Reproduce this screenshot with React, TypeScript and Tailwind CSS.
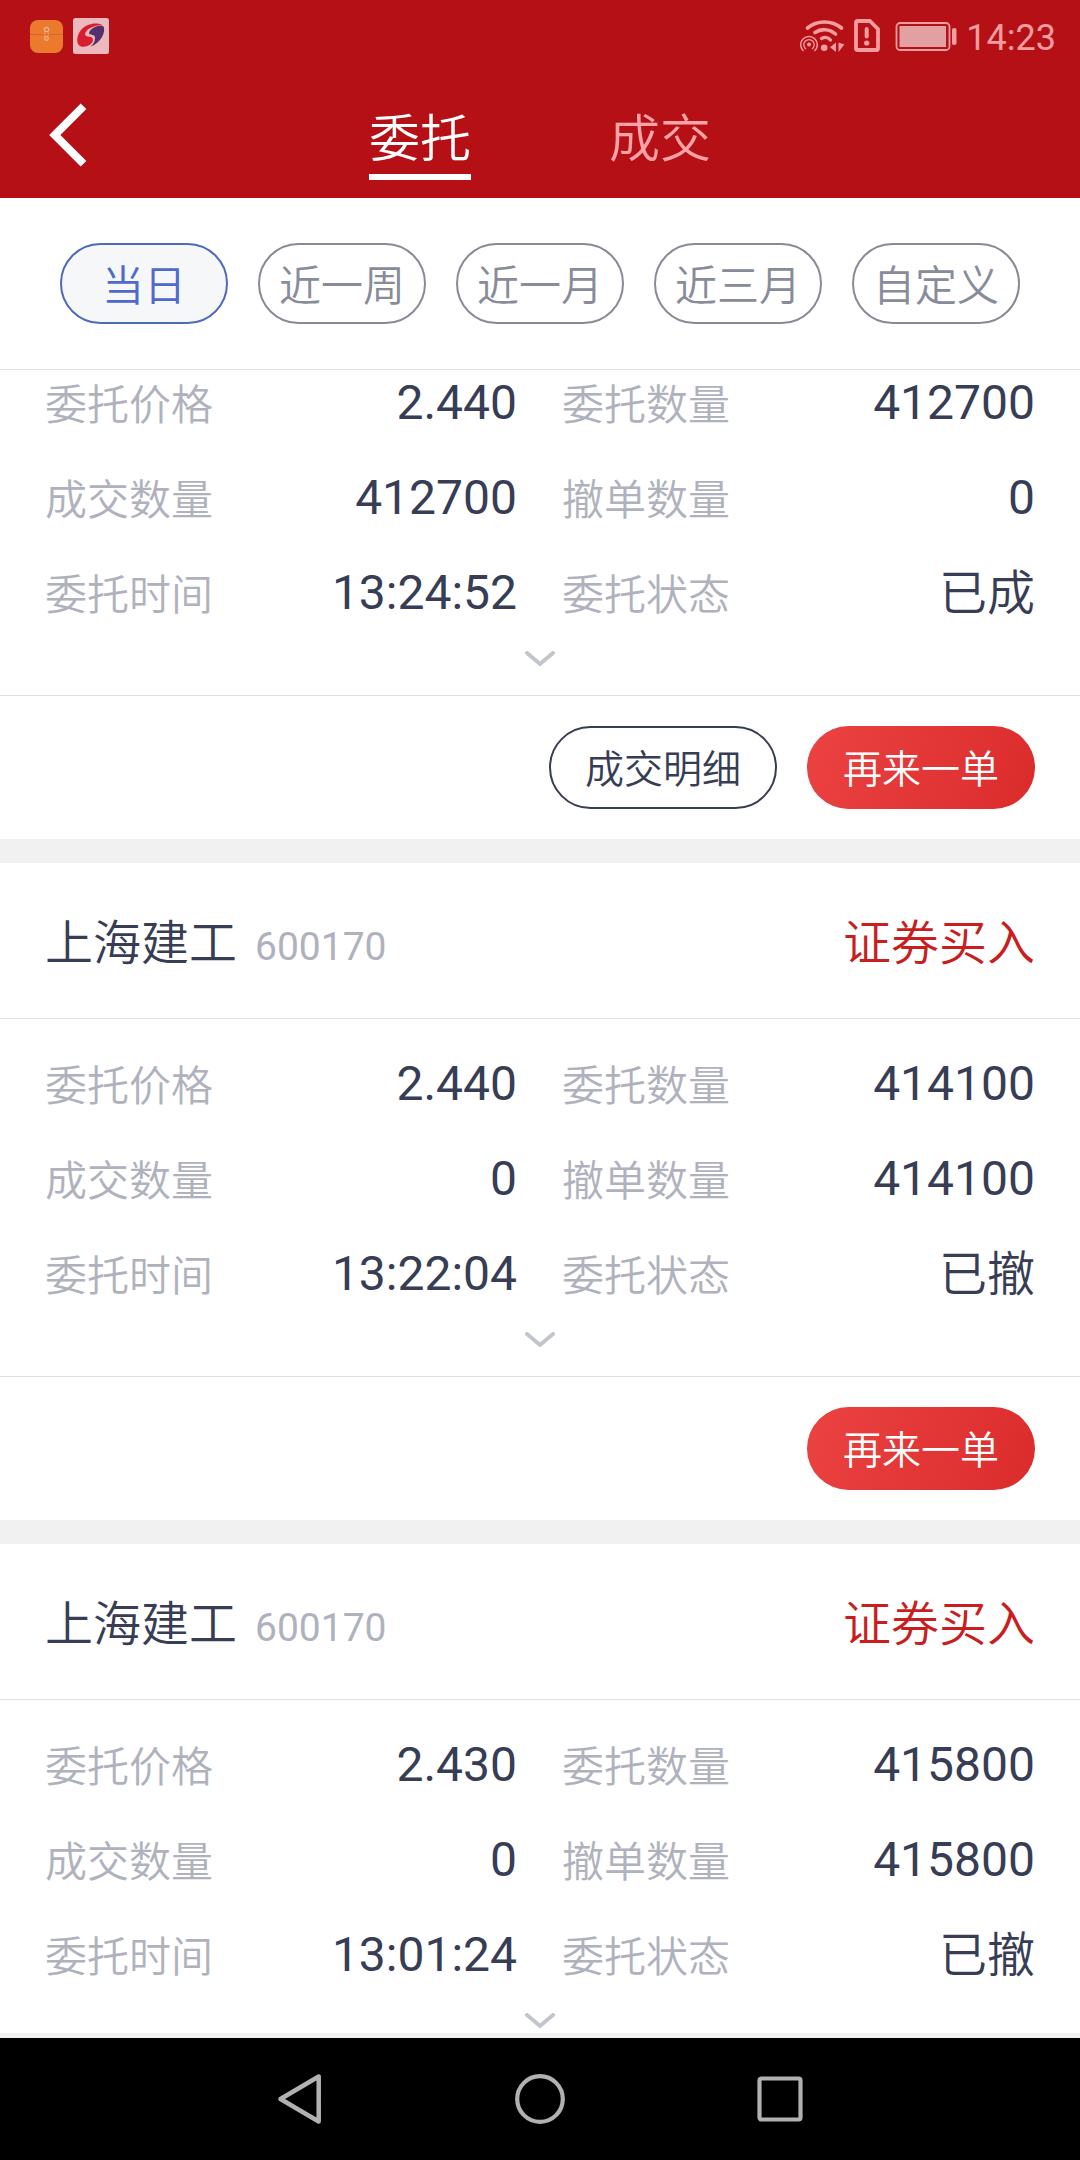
import type { FC } from 'react';

type Order = {
    name?: string;
    code?: string;
    side?: string;
    fields: [string, string][];
    detail?: boolean;
    again?: boolean;
};

const ranges = ['当日', '近一周', '近一月', '近三月', '自定义'];

const orders: Order[] = [
    {
        fields: [
            ['委托价格', '2.440'],
            ['委托数量', '412700'],
            ['成交数量', '412700'],
            ['撤单数量', '0'],
            ['委托时间', '13:24:52'],
            ['委托状态', '已成'],
        ],
        detail: true,
        again: true,
    },
    {
        name: '上海建工',
        code: '600170',
        side: '证券买入',
        fields: [
            ['委托价格', '2.440'],
            ['委托数量', '414100'],
            ['成交数量', '0'],
            ['撤单数量', '414100'],
            ['委托时间', '13:22:04'],
            ['委托状态', '已撤'],
        ],
        again: true,
    },
    {
        name: '上海建工',
        code: '600170',
        side: '证券买入',
        fields: [
            ['委托价格', '2.430'],
            ['委托数量', '415800'],
            ['成交数量', '0'],
            ['撤单数量', '415800'],
            ['委托时间', '13:01:24'],
            ['委托状态', '已撤'],
        ],
    },
];

const StatusBar: FC = () => {
    return (
        <div className="flex h-[72px] items-center justify-between pl-[30px] pr-6">
            <div className="flex items-center gap-2.5">
                <svg width="33" height="33" viewBox="0 0 33 33">
                    <rect width="33" height="33" rx="8" fill="#eb7a2c" />
                    <path d="M0 14.5h33" stroke="#d5642a" strokeWidth="1" />
                    <g fill="none" stroke="#e8b598" strokeWidth="1.2">
                        <circle cx="16.5" cy="9.5" r="2.2" />
                        <circle cx="16.5" cy="18.5" r="1.8" />
                        <path d="M14.8 12.5v3M18.2 12.5v3" strokeWidth="0.8" />
                    </g>
                </svg>
                <svg width="36" height="36" viewBox="0 0 36 36">
                    <rect width="36" height="36" rx="2.5" fill="#ecb9bd" />
                    <path d="M29 7C23 4 13 6 8 12C3 18 3 27 8 28.500C14 29.500 19.500 26.500 20 22C20.500 17 12.500 20 12 16.500C12 11.500 21 7 29 7Z" fill="#d81e2e" />
                    <path d="M29 7.500C23 7.500 16.500 11 16 15.500C17.500 18 22 15.500 22 20C22 24 20 26.500 17.500 28.500C25 26.500 30 19 31 13.500C31.500 10 31 8.500 29 7.500Z" fill="#55306e" />
                </svg>
            </div>

            <div className="flex items-center">
                <svg width="158" height="36" viewBox="0 0 158 36" fill="none" stroke="#f39da1">
                    {/* wifi with hotspot and traffic arrows */}
                    <g strokeWidth="3.6" strokeLinecap="round">
                        <path d="M7.500 10C17 2 32 2 41.500 10" />
                        <path d="M15 14.500C21 10.500 29 10.500 35.500 16" />
                        <path d="M21.500 20.500C25 18.500 28.500 19.500 30.500 22" strokeWidth="3.2" />
                    </g>
                    <circle cx="24.200" cy="29.800" r="3.300" fill="#f39da1" stroke="none" />
                    <circle cx="9" cy="26.500" r="2" fill="#f39da1" stroke="none" />
                    <path d="M6 31A5.200 5.200 0 1 1 12 31" strokeWidth="1.300" />
                    <path d="M3.500 33A8.300 8.300 0 1 1 14.500 33" strokeWidth="1.500" />
                    <path d="M36 24.500V34L30 29.300ZM38.500 24.500L44.300 26.500L38.500 34Z" fill="#f39da1" stroke="none" />
                    {/* sim card alert */}
                    <path d="M57 3H70L78 11V30.500Q78 32 76.500 32H57.500Q56 32 56 30.500V4.500Q56 3 57.500 3Z" strokeWidth="3.800" strokeLinejoin="round" />
                    <path d="M66.700 11V18.500" strokeWidth="4" strokeLinecap="round" />
                    <circle cx="66.700" cy="25" r="2.600" fill="#f39da1" stroke="none" />
                    {/* battery */}
                    <rect x="96.500" y="5" width="53" height="27" rx="3.500" strokeWidth="1.800" />
                    <rect x="99.500" y="8" width="46.500" height="21" fill="#e2a0a2" stroke="none" />
                    <rect x="152" y="10" width="4.500" height="17" rx="2" fill="#f39da1" stroke="none" />
                </svg>
                <span className="ml-2 pt-[3px] text-[36px] leading-none text-[#f39da1]">14:23</span>
            </div>
        </div>
    );
};

const Header: FC = () => {
    return (
        <header className="h-[198px] bg-[#b51015]">
            <StatusBar />
            <div className="flex h-[126px] items-start">
                <svg className="ml-12 mt-7" width="44" height="70" viewBox="0 0 44 70">
                    <path d="M35.500 6.200L6.800 35L35.500 63.800" fill="none" stroke="#fff" strokeWidth="8" />
                </svg>
                <div className="ml-[277px] mt-8 flex gap-[138px] text-[51px] font-[350] leading-[72px]">
                    <p className="h-[76px] border-b-6 border-white text-white">委托</p>
                    <p className="text-[#ffa3a6]">成交</p>
                </div>
            </div>
        </header>
    );
};

const OrderCard: FC<{ order: Order }> = ({ order }) => {
    return (
        <section className="border-b-24 border-[#f1f1f1] bg-white">
            {order.name && (
                <div className="flex h-[156px] items-center justify-between border-b border-[#e1e1e1] px-[45px] pt-[7px] text-5xl font-[350]">
                    <p className="flex items-baseline gap-[18px] text-[#373d54]">
                        {order.name}
                        <span className="text-[39px] font-normal text-[#afb2bd]">{order.code}</span>
                    </p>
                    <p className="text-[#c81e1e]">{order.side}</p>
                </div>
            )}

            <div className="h-[358px] border-b border-[#e1e1e1] pt-4">
                <div className="grid grid-cols-[472px_473px] gap-x-[45px] px-[45px]">
                    {order.fields.map(([label, value]) => (
                        <div key={label} className="flex h-[95px] items-center justify-between">
                            <span className="pt-2 text-[42px] font-[350] text-[#afb2bd]">{label}</span>
                            {label === '委托状态' ? (
                                <span className="pt-[5px] text-5xl font-[350] text-[#373d54]">{value}</span>
                            ) : (
                                <span className="pt-0.5 text-5xl text-[#373d54]">{value}</span>
                            )}
                        </div>
                    ))}
                </div>
                <svg className="mx-auto mt-3" width="30" height="16" viewBox="0 0 30 16">
                    <path d="M2 2L15 13L28 2" fill="none" stroke="#c3c5cd" strokeWidth="4" strokeLinecap="round" />
                </svg>
            </div>

            {order.again && (
                <div className="flex h-[143px] items-center justify-end gap-[30px] px-[45px] text-[39px] font-[350]">
                    {order.detail && (
                        <button className="h-[83px] w-[228px] rounded-full border-2 border-[#373d54] pt-1.5 text-[#373d54]">
                            成交明细
                        </button>
                    )}
                    <button className="h-[83px] w-[228px] rounded-full bg-linear-110 from-[#eb4242] to-[#db2b2b] pt-1.5 text-white">
                        再来一单
                    </button>
                </div>
            )}
        </section>
    );
};

const NavBar: FC = () => {
    return (
        <nav className="flex h-[122px] items-center justify-center gap-[192px] bg-black">
            <svg width="48" height="52" viewBox="0 0 48 52" fill="none" stroke="#b1b1b1" strokeWidth="4.500" strokeLinejoin="round">
                <path d="M43.700 3.500V48.500L5.500 26Z" />
            </svg>
            <svg width="50" height="50" viewBox="0 0 50 50" fill="none" stroke="#b1b1b1" strokeWidth="4.200">
                <circle cx="25" cy="25" r="22.800" />
            </svg>
            <svg width="48" height="48" viewBox="0 0 48 48" fill="none" stroke="#b1b1b1" strokeWidth="4.200">
                <rect x="2.500" y="3.500" width="41" height="41" rx="2" />
            </svg>
        </nav>
    );
};

const App: FC = () => {
    return (
        <div className="flex h-[2160px] w-[1080px] flex-col overflow-hidden bg-white font-[Roboto,'Noto_Sans_CJK_SC',sans-serif]">
            <Header />
            <div className="flex h-[172px] items-start gap-[30px] border-b border-[#e1e1e1] px-[60px] pt-[45px] text-[42px] font-[350] leading-none">
                {ranges.map((range, i) => (
                    <button
                        key={range}
                        className={
                            i === 0
                                ? 'h-[81px] w-[168px] rounded-full border-2 border-[#5069bd] bg-[#f6f7f8] pt-1.5 text-[#5069cb]'
                                : 'h-[81px] w-[168px] rounded-full border-2 border-[#888a96] pt-1.5 text-[#888c99]'
                        }
                    >
                        {range}
                    </button>
                ))}
            </div>
            <main className="h-[1663px] overflow-hidden">
                {/* list is scrolled part of the way into the first card */}
                <div className="-mt-8">
                    {orders.map((order, i) => (
                        <OrderCard key={i} order={order} />
                    ))}
                </div>
            </main>
            <div className="h-[5px] bg-[#f1f1f1]" />
            <NavBar />
        </div>
    );
};

export default App;
